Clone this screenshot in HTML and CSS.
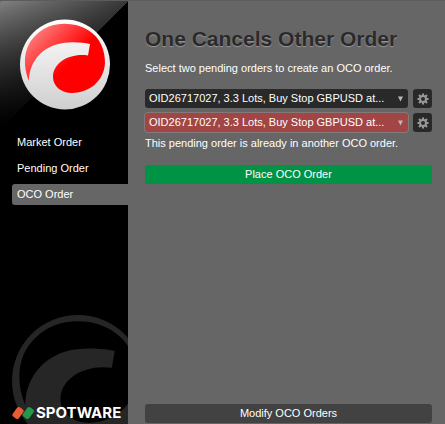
FILE: index.html
```html
<!DOCTYPE html>
<html lang="en">
<head>
<meta charset="utf-8">
<title>One Cancels Other Order</title>
<link rel="stylesheet" href="styles.css">
</head>
<body>
<div class="app">
  <aside class="sidebar">
    <svg class="logo" viewBox="20 19 90 91" aria-hidden="true">
      <defs>
        <linearGradient id="silver" x1="0" y1="0" x2="0" y2="1">
          <stop offset="0" stop-color="#fff"/>
          <stop offset="1" stop-color="#cfcfcf"/>
        </linearGradient>
        <linearGradient id="red" gradientUnits="userSpaceOnUse" x1="32" y1="32" x2="66" y2="66">
          <stop offset="0" stop-color="#ff8080"/>
          <stop offset="1" stop-color="#f00"/>
        </linearGradient>
        <path id="swoosh" d="M29 81C22 64 24 46 36 35C48 22 72 20 88 30C101 38 105 51 105 63C104 82 88 93 72 93C61 93 53 86 53 77C53 63 69 53 88 55.500L90 44C85 43 77 42 69 42.500C45 43 29 60 29 81Z"/>
      </defs>
      <circle cx="65" cy="64.500" r="45" fill="url(#silver)"/>
      <use href="#swoosh" fill="url(#red)"/>
    </svg>
    <nav class="nav">
      <a class="nav-item" href="#market">Market Order</a>
      <a class="nav-item" href="#pending">Pending Order</a>
      <a class="nav-item active" href="#oco" aria-current="page">OCO Order</a>
    </nav>
    <svg class="watermark" viewBox="12 315 116 109" aria-hidden="true">
      <circle cx="78" cy="381" r="66" fill="#262626"/>
      <use href="#swoosh" fill="#000" transform="translate(-17.300 286.400) scale(1.467)"/>
    </svg>
    <footer class="brand">
      <svg class="brand-mark" viewBox="0 0 22 14" aria-hidden="true">
        <rect x="2.200" y="1.200" width="7.600" height="11.600" rx="2.400" fill="#ec5a35" transform="rotate(36 6 7)"/>
        <rect x="12.500" y="1.200" width="7.600" height="11.600" rx="2.400" fill="#23984a" transform="rotate(36 16.300 7)"/>
      </svg>
      <span>SPOTWARE</span>
    </footer>
  </aside>

  <main class="panel">
    <h1>One Cancels Other Order</h1>
    <p class="intro">Select two pending orders to create an OCO order.</p>
    <div class="orders">
      <div class="order-row">
        <div class="picker">
          <select aria-label="First pending order"><option>OID26717027, 3.3 Lots, Buy Stop GBPUSD at...</option></select>
          <svg class="arrow" viewBox="0 0 6 6" aria-hidden="true"><path d="M0 0H6L3 6Z"/></svg>
        </div>
        <button class="gear" type="button" aria-label="First order settings">
          <svg viewBox="-6 -6 12 12" aria-hidden="true">
            <circle r="3" />
            <path d="M0-3.500V-5.500M0 3.500V5.500M-3.500 0H-5.500M3.500 0H5.500M-2.500-2.500L-4-4M2.500-2.500L4-4M-2.500 2.500L-4 4M2.500 2.500L4 4"/>
          </svg>
        </button>
      </div>
      <div class="order-row">
        <div class="picker invalid">
          <select aria-label="Second pending order" aria-invalid="true" aria-describedby="order-error"><option>OID26717027, 3.3 Lots, Buy Stop GBPUSD at...</option></select>
          <svg class="arrow" viewBox="0 0 6 6" aria-hidden="true"><path d="M0 0H6L3 6Z"/></svg>
        </div>
        <button class="gear" type="button" aria-label="Second order settings">
          <svg viewBox="-6 -6 12 12" aria-hidden="true">
            <circle r="3" />
            <path d="M0-3.500V-5.500M0 3.500V5.500M-3.500 0H-5.500M3.500 0H5.500M-2.500-2.500L-4-4M2.500-2.500L4-4M-2.500 2.500L-4 4M2.500 2.500L4 4"/>
          </svg>
        </button>
      </div>
    </div>
    <p class="error" id="order-error">This pending order is already in another OCO order.</p>
    <button class="action place" type="button">Place OCO Order</button>
    <button class="action modify" type="button">Modify OCO Orders</button>
  </main>
</div>
</body>
</html>
```

FILE: styles.css
```css
* {
  box-sizing: border-box;
}

body {
  margin: 0;
  background: #666;
  color: #fff;
  font: 11px/16px "Liberation Sans", Arial, sans-serif;
}

button,
select {
  font: inherit;
  color: inherit;
  border: 0;
}

.app {
  display: flex;
  min-height: 100vh;
  border-top: 1px solid #5c5c5c;
}

.sidebar {
  position: relative;
  display: flex;
  flex-direction: column;
  flex: none;
  width: 128px;
  padding: 18px 0 3px 12px;
  overflow: hidden;
  border-top-left-radius: 3px;
  background:
    linear-gradient(to bottom, transparent, #000 124px),
    linear-gradient(135deg, #808080, #383838 50%, #000 50%) 0 0 / 128px 128px no-repeat,
    #000;
}

.logo {
  width: 90px;
  height: 91px;
  margin-left: 8px;
}

.nav {
  display: grid;
  gap: 5px;
  margin-top: 22px;
}

.nav-item {
  height: 21px;
  padding-left: 5px;
  border-radius: 3px 0 0 3px;
  color: #fff;
  line-height: 21px;
  text-decoration: none;
}

.nav-item.active {
  background: #666;
}

.watermark {
  position: absolute;
  left: 12px;
  bottom: 0;
  width: 116px;
  height: 109px;
}

.brand {
  position: relative;
  display: flex;
  align-items: center;
  gap: 2px;
  margin-top: auto;
  font: bold 15px/16px Inter, sans-serif;
}

.brand-mark {
  width: 22px;
  height: 14px;
}

.panel {
  display: flex;
  flex-direction: column;
  flex: 1;
  min-width: 0;
  padding: 26px 13px 1px 17px;
}

h1 {
  margin: 0;
  color: #2a2a2a;
  font-size: 21px;
  line-height: 24px;
  text-shadow: 0 1px 1px #999;
}

p {
  margin: 0;
}

.intro {
  margin-top: 9px;
}

.orders {
  display: grid;
  gap: 5px;
  margin-top: 13px;
}

.order-row {
  display: flex;
  gap: 5px;
}

.picker {
  position: relative;
  flex: 1;
  min-width: 0;
}

.picker select {
  display: block;
  width: 100%;
  height: 19px;
  padding: 0 20px 2px 4px;
  border-radius: 3px;
  background: #292929;
  appearance: none;
}

.picker.invalid select {
  background: #a14545;
  box-shadow: 0 0 0 1px #857878;
}

.arrow {
  position: absolute;
  top: 7px;
  right: 5px;
  width: 5px;
  height: 6px;
  fill: #b8b8b8;
  pointer-events: none;
}

.gear {
  display: grid;
  place-items: center;
  flex: none;
  width: 19px;
  height: 19px;
  padding: 0;
  border-radius: 3px;
  background: #292929;
}

.gear svg {
  width: 12px;
  height: 12px;
  fill: none;
  stroke: #999;
  stroke-width: 2;
}

.error {
  margin-top: 3px;
}

.action {
  height: 19px;
  padding: 0 0 2px;
  border-radius: 3px;
}

.place {
  margin-top: 14px;
  background: #009245;
}

.modify {
  margin-top: auto;
  background: #424242;
}
```
